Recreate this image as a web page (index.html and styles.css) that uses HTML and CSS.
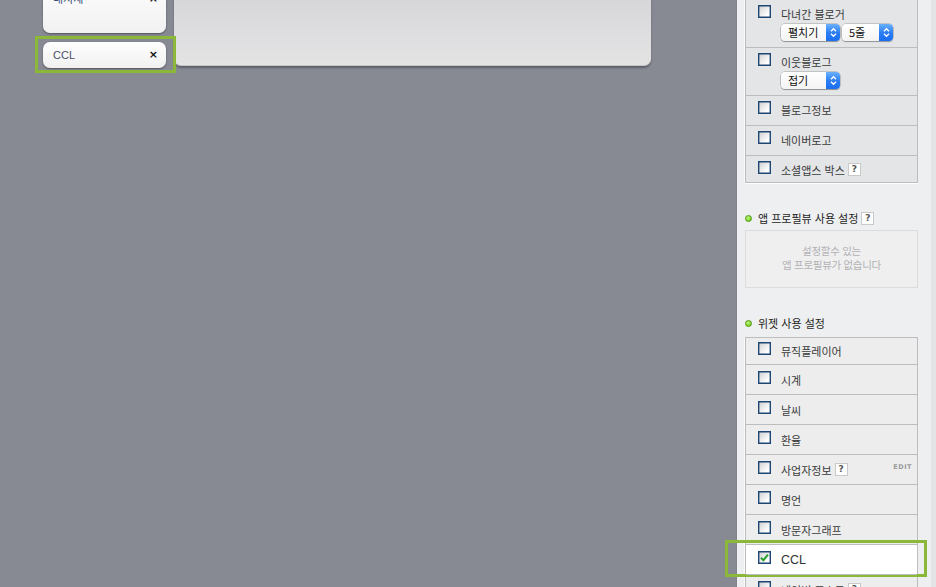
FILE: index.html
```html
<!DOCTYPE html>
<html lang="ko">
<head>
<meta charset="utf-8">
<title>Layout</title>
<link rel="stylesheet" href="styles.css">
</head>
<body>
<div class="screen">
  <div class="workspace">
    <div class="cards">
      <div class="card card-top">
        <span class="card-title">내지세</span>
        <span class="card-close">×</span>
      </div>
      <div class="card card-small highlighted">
        <span class="card-title">CCL</span>
        <span class="card-close">×</span>
      </div>
    </div>
    <div class="panel"></div>
  </div>

  <aside class="sidebar">
    <ul class="list list-blog">
      <li class="row row-tall">
        <span class="cb"></span>
        <div class="row-body">
          <span class="label">다녀간 블로거</span>
          <div class="selects">
            <span class="select select-wide"><span class="select-text">펼치기</span><span class="select-arrows"><svg viewBox="0 0 7 11" width="7" height="11"><path d="M1 4.2 L3.5 1.7 L6 4.2 M1 6.8 L3.5 9.3 L6 6.8" fill="none" stroke="#fff" stroke-width="1.3"/></svg></span></span>
            <span class="select select-narrow"><span class="select-text">5줄</span><span class="select-arrows"><svg viewBox="0 0 7 11" width="7" height="11"><path d="M1 4.2 L3.5 1.7 L6 4.2 M1 6.8 L3.5 9.3 L6 6.8" fill="none" stroke="#fff" stroke-width="1.3"/></svg></span></span>
          </div>
        </div>
      </li>
      <li class="row row-tall">
        <span class="cb"></span>
        <div class="row-body">
          <span class="label">이웃블로그</span>
          <div class="selects">
            <span class="select select-wide"><span class="select-text">접기</span><span class="select-arrows"><svg viewBox="0 0 7 11" width="7" height="11"><path d="M1 4.2 L3.5 1.7 L6 4.2 M1 6.8 L3.5 9.3 L6 6.8" fill="none" stroke="#fff" stroke-width="1.3"/></svg></span></span>
          </div>
        </div>
      </li>
      <li class="row"><span class="cb"></span><span class="label">블로그정보</span></li>
      <li class="row"><span class="cb"></span><span class="label">네이버로고</span></li>
      <li class="row row-last"><span class="cb"></span><span class="label">소셜앱스 박스</span><span class="help">?</span></li>
    </ul>

    <h3 class="section-title section-app"><span class="dot"></span>앱 프로필뷰 사용 설정<span class="help help-title">?</span></h3>
    <div class="empty-box">설정할수 있는<br>앱 프로필뷰가 없습니다</div>

    <h3 class="section-title section-widget"><span class="dot"></span>위젯 사용 설정</h3>
    <ul class="list list-widget">
      <li class="row row-first"><span class="cb"></span><span class="label">뮤직플레이어</span></li>
      <li class="row"><span class="cb"></span><span class="label">시계</span></li>
      <li class="row"><span class="cb"></span><span class="label">날씨</span></li>
      <li class="row"><span class="cb"></span><span class="label">환율</span></li>
      <li class="row"><span class="cb"></span><span class="label">사업자정보</span><span class="help">?</span><span class="edit">EDIT</span></li>
      <li class="row"><span class="cb"></span><span class="label">명언</span></li>
      <li class="row"><span class="cb"></span><span class="label">방문자그래프</span></li>
      <li class="row row-selected highlighted"><span class="cb cb-checked"><svg viewBox="0 0 11 11" width="11" height="11"><path d="M2 5.8 L4.4 8.2 L9 2.6" fill="none" stroke="#2aa12a" stroke-width="2"/></svg></span><span class="label label-latin">CCL</span></li>
      <li class="row"><span class="cb"></span><span class="label">네이버 포스트</span><span class="help">?</span></li>
    </ul>
  </aside>
</div>
</body>
</html>
```

FILE: styles.css
```css
* { box-sizing: border-box; }

html, body {
  margin: 0;
  padding: 0;
}

body {
  width: 936px;
  height: 587px;
  overflow: hidden;
  background: #878a93;
  font-family: "Noto Sans CJK KR", "Liberation Sans", sans-serif;
  color: #333;
}

.screen {
  display: flex;
  height: 587px;
}

/* ---------- left workspace ---------- */
.workspace {
  width: 736px;
  flex: none;
  display: flex;
  align-items: flex-start;
  gap: 8px;
  padding-left: 43px;
}

.cards {
  width: 123px;
  display: flex;
  flex-direction: column;
  gap: 9px;
  margin-top: -20px;
}

.card {
  position: relative;
  display: flex;
  justify-content: space-between;
  align-items: center;
  padding: 0 8px 0 10px;
  border-radius: 7px;
  background: linear-gradient(#fefefe, #f1f1f2);
  box-shadow: 0 1px 2px rgba(0, 0, 0, 0.4);
}

.card-top {
  height: 53px;
  align-items: flex-start;
  padding-top: 12px;
}

.card-top .card-title {
  color: #3b4f78;
  font-size: 11px;
  line-height: 14px;
}

.card-small {
  height: 26px;
}

.card-title {
  font-family: "Liberation Sans", "Noto Sans CJK KR", sans-serif;
  font-size: 11px;
  line-height: 14px;
  color: #4a5064;
}

.card-close {
  font-family: "DejaVu Sans", sans-serif;
  font-size: 11px;
  line-height: 14px;
  font-weight: bold;
  color: #111;
}

.panel {
  width: 477px;
  height: 76px;
  margin-top: -10px;
  border-radius: 0 0 7px 7px;
  background: linear-gradient(#d5d5d7, #dedee0 60%, #e3e3e4);
  border-bottom: 1px solid #c6c6c8;
  box-shadow: 0 2px 2px rgba(0, 0, 0, 0.3);
}

.highlighted::after {
  content: "";
  position: absolute;
  border: 3px solid #8cb83a;
  pointer-events: none;
}

.card-small.highlighted::after {
  left: -8px;
  top: -6px;
  right: -10px;
  bottom: -5px;
}

/* ---------- sidebar ---------- */
.sidebar {
  width: 200px;
  flex: none;
  height: 587px;
  background: #eeeff0;
  border-left: 1px solid #80838b;
  border-right: 5px solid #e3e4e6;
  padding: 0 13px 0 8px;
}

.list {
  list-style: none;
  margin: 0;
  padding: 0;
  border: 1px solid #bdbdbf;
  box-shadow: 0 1px 0 #fff, -1px 0 0 #fafafa;
}

.list-blog {
  margin-top: -1px;
  background: #e4e5e7;
}

.list-widget {
  margin-top: 6px;
  background: #ededee;
}

.row {
  position: relative;
  display: flex;
  align-items: flex-start;
  height: 30px;
  padding: 5px 4px 0 12px;
  border-top: 1px solid #bdbdbf;
}

.list-blog .row:first-child {
  border-top: none;
  height: 47px;
}

.row-tall {
  height: 48px;
}

.list-blog .row-last {
  height: 27px;
}

.list-widget .row {
  padding-top: 6px;
}

.list-widget .row-first {
  border-top: none;
  height: 26px;
  padding-top: 4px;
}

.row-selected {
  background: #fff;
}

.row-selected.highlighted::after {
  left: -21px;
  top: -5px;
  right: -10px;
  bottom: -3px;
}

.cb {
  flex: none;
  width: 13px;
  height: 13px;
  margin-right: 10px;
  border: 1px solid #1f4774;
  box-shadow: inset 0 0 0 0.4px #1f4774;
  background: linear-gradient(135deg, #cfd0d1, #fdfdfd 75%);
  display: flex;
  align-items: center;
  justify-content: center;
}

.cb-checked svg {
  display: block;
}

.row-body {
  display: flex;
  flex-direction: column;
}

.label {
  font-size: 11px;
  line-height: 18px;
  color: #3a3a3a;
  white-space: nowrap;
}

.label-latin {
  font-family: "Liberation Sans", sans-serif;
  font-size: 12.5px;
  color: #333;
}

.selects {
  display: flex;
  gap: 2px;
  margin-top: 1px;
}

.select {
  display: flex;
  height: 17px;
  border-radius: 4px;
  background: linear-gradient(#ffffff, #f4f4f4);
  box-shadow: 0 0 0 0.5px rgba(0, 0, 0, 0.3), 0 1px 1px rgba(0, 0, 0, 0.25);
}

.select-wide { width: 59px; }
.select-narrow { width: 51px; }

.select-text {
  flex: 1;
  padding-left: 7px;
  font-size: 11px;
  line-height: 17px;
  color: #111;
}

.select-arrows {
  width: 14px;
  border-radius: 0 4px 4px 0;
  background: linear-gradient(#6ab0fb, #2a7cf4 55%, #1a6ef0);
  display: flex;
  align-items: center;
  justify-content: center;
}

.select-arrows svg { display: block; }

.help {
  flex: none;
  width: 13px;
  height: 13px;
  margin: 2px 0 0 3px;
  background: #fff;
  border: 1px solid #c9c9c9;
  font-family: "DejaVu Sans", sans-serif;
  font-size: 9px;
  font-weight: bold;
  line-height: 11px;
  text-align: center;
  color: #555;
}

.edit {
  margin-left: auto;
  margin-right: 1px;
  font-family: "DejaVu Sans", sans-serif;
  font-size: 6.5px;
  font-weight: bold;
  letter-spacing: 0.5px;
  line-height: 12px;
  color: #9a9a9a;
}

.section-title {
  display: flex;
  align-items: center;
  height: 16px;
  margin: 27px 0 0;
  font-size: 11px;
  font-weight: 400;
  line-height: 16px;
  color: #1e1e1e;
}

.section-title .help-title {
  margin: 0 0 0 3px;
}

.dot {
  width: 7px;
  height: 7px;
  margin-right: 6px;
  border-radius: 50%;
  background: radial-gradient(circle at 40% 35%, #c4f58a, #77d31f 70%);
  border: 1px solid #4f9a12;
}

.empty-box {
  height: 58px;
  margin-top: 4px;
  border: 1px solid #dcdcdd;
  background: #efeff0;
  padding-top: 13px;
  font-size: 10.5px;
  line-height: 14px;
  text-align: center;
  color: #b2b2b4;
  letter-spacing: -0.3px;
}
```
